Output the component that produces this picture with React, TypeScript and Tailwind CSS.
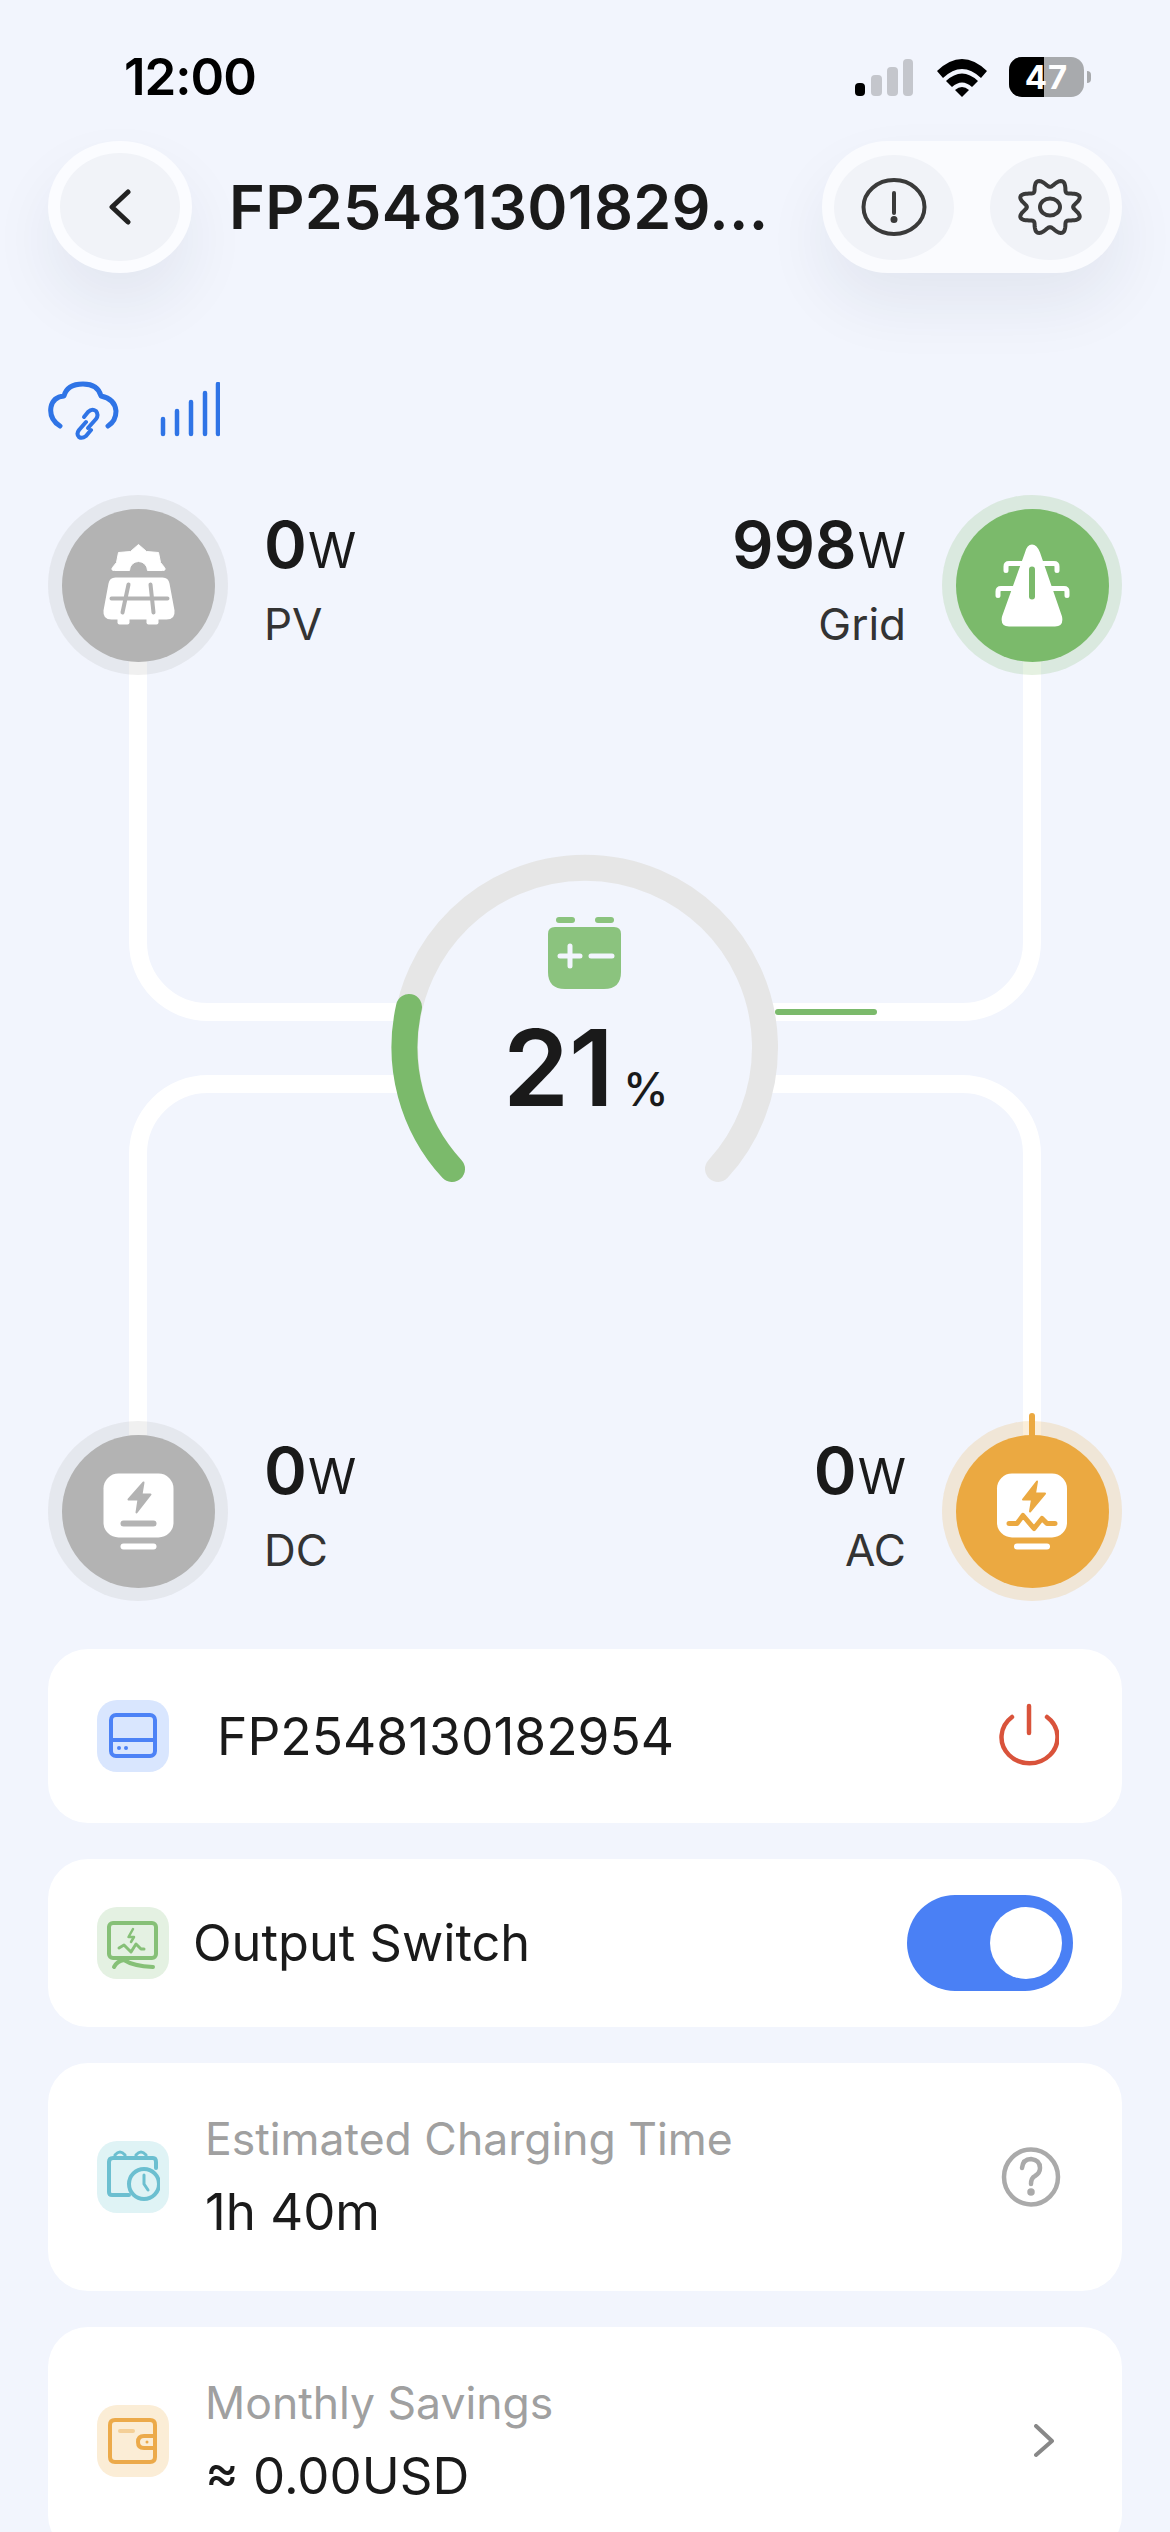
import React from "react";

function gearPath(cx: number, cy: number, rx: number, ry: number) {
  const pts: string[] = [];
  for (let i = 0; i < 180; i++) {
    const t = (i / 180) * Math.PI * 2;
    const r = 1 + 0.16 * Math.cos(8 * (t + Math.PI / 8));
    pts.push(`${(cx + rx * r * Math.cos(t)).toFixed(1)} ${(cy + ry * r * Math.sin(t)).toFixed(1)}`);
  }
  return "M" + pts.join("L") + "Z";
}

function StatusBar() {
  return (
    <div className="pt-[57px] h-[97px] flex items-center justify-between pl-[124px] pr-[79px]">
      <div className="text-[51px] leading-[40px] font-semibold text-black tracking-[-1px]">12:00</div>
      <div className="flex items-center gap-[22px]">
        <svg width="60" height="40" viewBox="856 57 60 40">
          <rect x="856" y="83" width="10" height="13" rx="4" fill="#000" />
          <rect x="872" y="75" width="11" height="21" rx="4" fill="#c4c6cc" />
          <rect x="888" y="67" width="11" height="29" rx="4" fill="#c4c6cc" />
          <rect x="904" y="59" width="10" height="37" rx="4" fill="#c4c6cc" />
        </svg>
        <svg width="50" height="40" viewBox="937 57 50 40">
          <path d="M937 71 Q962 47 987 71 L981 78 Q962 60 943 78Z" fill="#000" />
          <path d="M946 81 Q962 66 978 81 L972 87 Q962 78 952 87Z" fill="#000" />
          <path d="M955 90 Q962 84 969 90 L962 97Z" fill="#000" />
        </svg>
        <div className="flex items-center gap-[3px]">
          <div className="relative w-[75px] h-[40px] rounded-[13px] overflow-hidden flex bg-[#a8aaad]">
            <div className="w-[35px] h-full bg-black" />
            <div className="absolute inset-0 flex items-center justify-center text-white text-[33px] font-bold leading-none tracking-[1px]">47</div>
          </div>
          <div className="w-[4px] h-[12px] rounded-r-[4px] bg-[#a8aaad]" />
        </div>
      </div>
    </div>
  );
}

function Header() {
  return (
    <div className="mt-[44px] flex items-center px-[48px]">
      <div className="w-[144px] h-[132px] rounded-[50%] bg-[#fbfcff] flex items-center justify-center shadow-[0_32px_64px_rgba(30,40,70,0.07)]">
        <div className="w-[120px] h-[108px] rounded-[50%] bg-[#f1f3f8] flex items-center justify-center">
          <svg width="24" height="36" viewBox="108 189 24 36" fill="none" stroke="#222" strokeWidth="5" strokeLinecap="round" strokeLinejoin="round">
            <path d="M128 192 L112 207 L128 222" />
          </svg>
        </div>
      </div>
      <div className="ml-[37px] text-[61px] leading-[72px] font-semibold text-[#1a1a1a] tracking-[0.3px]">FP25481301829...</div>
      <div className="ml-auto w-[300px] h-[132px] rounded-[66px] bg-[#fafbfe] flex items-center justify-between px-[12px] shadow-[0_32px_64px_rgba(30,40,70,0.07)]">
        <div className="w-[120px] h-[105px] rounded-[50%] bg-[#f1f3f8] flex items-center justify-center">
          <svg width="66" height="60" viewBox="861 176 66 60" fill="none" stroke="#3a3a3a" strokeWidth="4" strokeLinecap="round">
            <ellipse cx="894" cy="206" rx="30.5" ry="27" />
            <path d="M894 192 V212" />
            <circle cx="894" cy="218.5" r="1.5" fill="#3a3a3a" />
          </svg>
        </div>
        <div className="w-[120px] h-[105px] rounded-[50%] bg-[#f1f3f8] flex items-center justify-center">
          <svg width="70" height="62" viewBox="1015 175 70 62" fill="none" stroke="#3a3a3a" strokeWidth="4" strokeLinejoin="round">
            <path d={gearPath(1050, 206, 27.5, 24)} />
            <ellipse cx="1050" cy="206" rx="10" ry="8.5" />
          </svg>
        </div>
      </div>
    </div>
  );
}

function Connectivity() {
  return (
    <div className="mt-[109px] h-[59px] flex items-end px-[48px]">
      <svg width="71" height="60" viewBox="48 382 71 60" fill="none" stroke="#2f74e6" strokeWidth="5" strokeLinecap="round" strokeLinejoin="round">
        <path d="M60 427 Q49 420 51 408 Q53 398 64 397 Q67 385 83 385 Q98 385 101 397 Q115 400 116 412 Q116 422 108 427" />
        <path d="M84 418 L88 413 Q92 409 96 412 Q99 416 96 420 L88 429" strokeWidth="4" />
        <path d="M86 423 L79 431 Q76 435 79 438 Q82 440 86 437 L91 431" strokeWidth="4" />
      </svg>
      <svg className="ml-[41px] mb-[4px]" width="60" height="55" viewBox="158 383 60 55" stroke="#2f74e6" strokeWidth="4.5" strokeLinecap="round">
        <path d="M161 420 V435 M175 412 V435 M189 403 V435 M203 394 V435 M216 385 V435" />
      </svg>
    </div>
  );
}

function ValueText({ value, label, right }: { value: string; label: string; right?: boolean }) {
  return (
    <div className={`pt-[18px] flex flex-col ${right ? "items-end" : "items-start"}`}>
      <div className="h-[64px] flex items-baseline text-[#1a1a1a]">
        <span className="text-[65px] leading-[64px] font-semibold">{value}</span>
        <span className="text-[49px] leading-[64px] font-normal ml-[1px]">W</span>
      </div>
      <div className="mt-[22px] text-[44px] leading-[50px] text-[#333]">{label}</div>
    </div>
  );
}

function Node({ ring, fill, box, children }: { ring: string; fill: string; box: string; children: React.ReactNode }) {
  return (
    <div className={`relative w-[180px] h-[180px] rounded-full flex items-center justify-center ${ring}`}>
      <div className={`w-[153px] h-[153px] rounded-full ${fill}`}>
        <svg width="153" height="153" viewBox={box}>
          {children}
        </svg>
      </div>
    </div>
  );
}

function Diagram() {
  return (
    <div className="relative mt-[54px] mx-[48px] h-[1106px] flex flex-col justify-between">
      <svg className="absolute inset-0" width="1074" height="1106" viewBox="48 495 1074 1106" fill="none">
        <defs>
          <filter id="glow" x="-50%" y="-300%" width="200%" height="700%">
            <feGaussianBlur stdDeviation="7" />
          </filter>
          <filter id="glow2" x="-300%" y="-50%" width="700%" height="200%">
            <feGaussianBlur stdDeviation="7" />
          </filter>
        </defs>
        <g stroke="#fff" strokeWidth="18">
          <path d="M138 660 V942 A70 70 0 0 0 208 1012 H400" />
          <path d="M1032 660 V942 A70 70 0 0 1 962 1012 H770" />
          <path d="M138 1436 V1154 A70 70 0 0 1 208 1084 H400" />
          <path d="M1032 1436 V1154 A70 70 0 0 0 962 1084 H770" />
        </g>
        <path d="M778 1012 H876" stroke="#7bba6b" strokeWidth="20" opacity="0.4" filter="url(#glow)" />
        <path d="M778 1012 H874" stroke="#7bba6b" strokeWidth="6" strokeLinecap="round" />
        <path d="M1032 1414 V1440" stroke="#eba941" strokeWidth="24" opacity="0.35" filter="url(#glow2)" />
        <path d="M1032 1416 V1440" stroke="#eba941" strokeWidth="6" strokeLinecap="round" />
        <path d="M452 1169 A180 180 0 1 1 718 1169" stroke="#e6e6e6" strokeWidth="26" strokeLinecap="round" />
        <path d="M452 1169 A180 180 0 0 1 409 1007" stroke="#7bba6b" strokeWidth="26" strokeLinecap="round" />
        <g fill="#8bc37e">
          <rect x="556" y="917" width="19" height="6" rx="3" />
          <rect x="595" y="917" width="19" height="6" rx="3" />
          <path d="M555 927 H614 Q621 927 621 934 V972 Q621 989 604 989 H565 Q548 989 548 972 V934 Q548 927 555 927Z" />
        </g>
        <path d="M560 956 H580 M570 946 V966 M591 956 H612" stroke="#f2f5fd" strokeWidth="5" strokeLinecap="round" />
      </svg>

      <div className="relative flex justify-between">
        <div className="flex gap-[36px]">
          <Node ring="bg-[#b3b3b3]/20" fill="bg-[#b3b3b3]" box="61.5 508.5 153 153">
            <path d="M138 544 L146 551 L158 552 L160 562 L164 567 Q166 570 162 570 H147 A9 9 0 0 0 129 570 H114 Q110 570 112 567 L116 562 L118 552 L130 551Z" fill="#fff" stroke="#fff" strokeLinejoin="round" />
            <path d="M115 577 H162 Q168 577 169 583 L174 610 Q175 619 166 619 H111 Q102 619 103 610 L108 583 Q109 577 115 577Z" fill="#fff" />
            <rect x="117" y="617" width="12" height="7" rx="2" fill="#fff" />
            <rect x="146" y="617" width="12" height="7" rx="2" fill="#fff" />
            <path d="M111 598 H167 M128 584 L122 612 M150 584 L153 612" stroke="#b3b3b3" strokeWidth="4" strokeLinecap="round" />
          </Node>
          <ValueText value="0" label="PV" />
        </div>
        <div className="flex gap-[36px]">
          <ValueText value="998" label="Grid" right />
          <Node ring="bg-[#7bba6b]/20" fill="bg-[#7bba6b]" box="956 508.5 153 153">
            <path d="M1025 552 Q1027 544 1032 544 Q1037 544 1040 552 L1062 616 Q1064 626 1055 626 H1009 Q1000 626 1002 616Z" fill="#fff" />
            <rect x="1029" y="566" width="6" height="33" rx="3" fill="#7bba6b" />
            <path d="M1024 563 H1009 Q1006 563 1006 566 V570 M1040 563 H1054 Q1057 563 1057 566 V570 M1018 588 H1001 Q998 588 998 591 V595 M1048 588 H1064 Q1067 588 1067 591 V595" stroke="#fff" strokeWidth="5" strokeLinecap="round" fill="none" />
          </Node>
        </div>
      </div>

      <div className="relative flex justify-between">
        <div className="flex gap-[36px]">
          <Node ring="bg-[#b3b3b3]/20" fill="bg-[#b3b3b3]" box="61.5 1434.5 153 153">
            <rect x="103" y="1473" width="70" height="64" rx="15" fill="#fff" />
            <path d="M143 1482 L128 1499 H138 L136 1512 L150 1494 H141Z" fill="#b3b3b3" stroke="#b3b3b3" strokeWidth="2" strokeLinejoin="round" />
            <rect x="120" y="1520" width="36" height="6" rx="3" fill="#b3b3b3" />
            <rect x="120" y="1543" width="36" height="6" rx="3" fill="#fff" />
          </Node>
          <ValueText value="0" label="DC" />
        </div>
        <div className="flex gap-[36px]">
          <ValueText value="0" label="AC" right />
          <Node ring="bg-[#eba941]/20" fill="bg-[#eba941]" box="956 1434.5 153 153">
            <rect x="997" y="1473" width="70" height="64" rx="15" fill="#fff" />
            <path d="M1037 1481 L1023 1499 H1032 L1030 1511 L1045 1493 H1035Z" fill="#eba941" stroke="#eba941" strokeWidth="2" strokeLinejoin="round" />
            <path d="M1009 1523 H1017 L1023 1515 L1034 1528 L1042 1518 L1047 1523 H1055" stroke="#eba941" strokeWidth="5" strokeLinecap="round" strokeLinejoin="round" fill="none" />
            <rect x="1014" y="1543" width="36" height="6" rx="3" fill="#fff" />
          </Node>
        </div>
      </div>

      <div className="absolute left-[455px] top-[520px] flex items-baseline text-[#1a1a1a]">
        <span className="text-[106px] leading-[106px] font-semibold">21</span>
        <span className="text-[46px] leading-[106px] font-medium ml-[9px]">%</span>
      </div>
    </div>
  );
}

function Tile({ bg, children }: { bg: string; children: React.ReactNode }) {
  return <div className={`w-[72px] h-[72px] rounded-[20px] flex-none flex items-center justify-center ${bg}`}>{children}</div>;
}

function Cards() {
  return (
    <div className="mt-[48px] mx-[48px] flex flex-col gap-[36px]">
      <div className="h-[174px] rounded-[40px] bg-white flex items-center pl-[49px] pr-[63px]">
        <Tile bg="bg-[#d9e6fe]">
          <svg width="48" height="46" viewBox="108 1714 48 46" fill="none" stroke="#4c82f6" strokeWidth="4">
            <rect x="110" y="1716" width="44" height="41" rx="5" />
            <path d="M110 1741 H154" />
            <circle cx="118" cy="1749" r="2" fill="#4c82f6" stroke="none" />
            <circle cx="125" cy="1749" r="2" fill="#4c82f6" stroke="none" />
          </svg>
        </Tile>
        <div className="ml-[48px] text-[51.5px] leading-[60px] text-[#1a1a1a]">FP2548130182954</div>
        <svg className="ml-auto" width="60" height="66" viewBox="999 1703 60 66" fill="none" stroke="#d9533b" strokeWidth="4.5" strokeLinecap="round">
          <path d="M1012 1717 A28 26 0 1 0 1047 1717" />
          <path d="M1029 1706 V1733" />
        </svg>
      </div>

      <div className="h-[168px] rounded-[40px] bg-white flex items-center pl-[49px] pr-[49px]">
        <Tile bg="bg-[#e4f1e2]">
          <svg width="54" height="54" viewBox="105 1916 54 54" fill="none" stroke="#86c077" strokeWidth="4" strokeLinecap="round" strokeLinejoin="round">
            <rect x="108" y="1923" width="47" height="35" rx="4" />
            <path d="M132 1929 L127.5 1937 H133 L130 1942" strokeWidth="2.5" />
            <path d="M118 1948 L123 1945 L130 1952 L135 1944 L140 1949 H143" strokeWidth="3" />
            <path d="M113 1967 Q116 1961 123 1960 Q132 1966 152 1967" />
          </svg>
        </Tile>
        <div className="ml-[24px] text-[50.5px] leading-[60px] text-[#1a1a1a]">Output Switch</div>
        <div className="ml-auto w-[166px] h-[96px] rounded-[48px] bg-[#4a80f5] flex items-center justify-end pr-[11px]">
          <div className="w-[72px] h-[72px] rounded-full bg-white" />
        </div>
      </div>

      <div className="h-[228px] rounded-[40px] bg-white flex items-center pl-[49px] pr-[61px]">
        <Tile bg="bg-[#dff3f5]">
          <svg width="54" height="54" viewBox="105 2146 54 54" fill="none" stroke="#6cbfd0" strokeWidth="4" strokeLinecap="round" strokeLinejoin="round">
            <path d="M128 2191 H111 Q108 2191 108 2188 V2158 Q108 2154 112 2154 H152 Q155 2154 155 2158 V2164" />
            <path d="M114 2154 V2151 Q119 2145 124 2151 V2154 M135 2154 V2151 Q140 2145 145 2151 V2154" strokeWidth="3" />
            <circle cx="143" cy="2180" r="15" fill="#dff3f5" />
            <path d="M143 2171 V2180 L147 2186" strokeWidth="3" />
          </svg>
        </Tile>
        <div className="ml-[36px] flex flex-col">
          <div className="text-[44.5px] leading-[54px] text-[#a0a0a0]">Estimated Charging Time</div>
          <div className="mt-[16px] text-[51px] leading-[60px] text-[#1a1a1a]">1h 40m</div>
        </div>
        <svg className="ml-auto" width="60" height="62" viewBox="1002 2146 60 62" fill="none" stroke="#aaaaaa" strokeWidth="4.5" strokeLinecap="round" strokeLinejoin="round">
          <ellipse cx="1032" cy="2177" rx="27" ry="27.5" />
          <path d="M1023 2168 Q1024 2159 1032 2159 Q1041 2160 1041 2168 Q1041 2173 1036 2176 Q1032 2178 1032 2184" />
          <circle cx="1032" cy="2192" r="1.5" fill="#aaaaaa" />
        </svg>
      </div>

      <div className="h-[228px] rounded-[40px] bg-white flex items-center pl-[49px] pr-[68px]">
        <Tile bg="bg-[#fbedd6]">
          <svg width="50" height="46" viewBox="108 2414 50 46" fill="none" stroke="#ecaa4a" strokeWidth="4" strokeLinecap="round" strokeLinejoin="round">
            <path d="M155 2432 V2421 Q155 2416 150 2416 H115 Q110 2416 110 2421 V2453 Q110 2458 115 2458 H150 Q155 2458 155 2453 V2444" />
            <path d="M155 2432 H144 Q138 2432 138 2438 Q138 2444 144 2444 H155Z" />
            <circle cx="147" cy="2438" r="1.5" fill="#ecaa4a" stroke="none" />
            <path d="M120 2427 H133" stroke="#f4cf97" />
          </svg>
        </Tile>
        <div className="ml-[36px] flex flex-col">
          <div className="text-[44.5px] leading-[54px] text-[#a0a0a0]">Monthly Savings</div>
          <div className="mt-[16px] text-[51px] leading-[60px] text-[#1a1a1a]">≈ 0.00USD</div>
        </div>
        <svg className="ml-auto" width="20" height="34" viewBox="1035 2425 20 34" fill="none" stroke="#888" strokeWidth="4" strokeLinecap="round" strokeLinejoin="round">
          <path d="M1037 2427 L1053 2442 L1037 2456" />
        </svg>
      </div>
    </div>
  );
}

export default function App() {
  return (
    <div className="w-[1170px] h-[2532px] overflow-hidden bg-[#f2f5fd] font-['Inter',sans-serif]">
      <StatusBar />
      <Header />
      <Connectivity />
      <Diagram />
      <Cards />
    </div>
  );
}
